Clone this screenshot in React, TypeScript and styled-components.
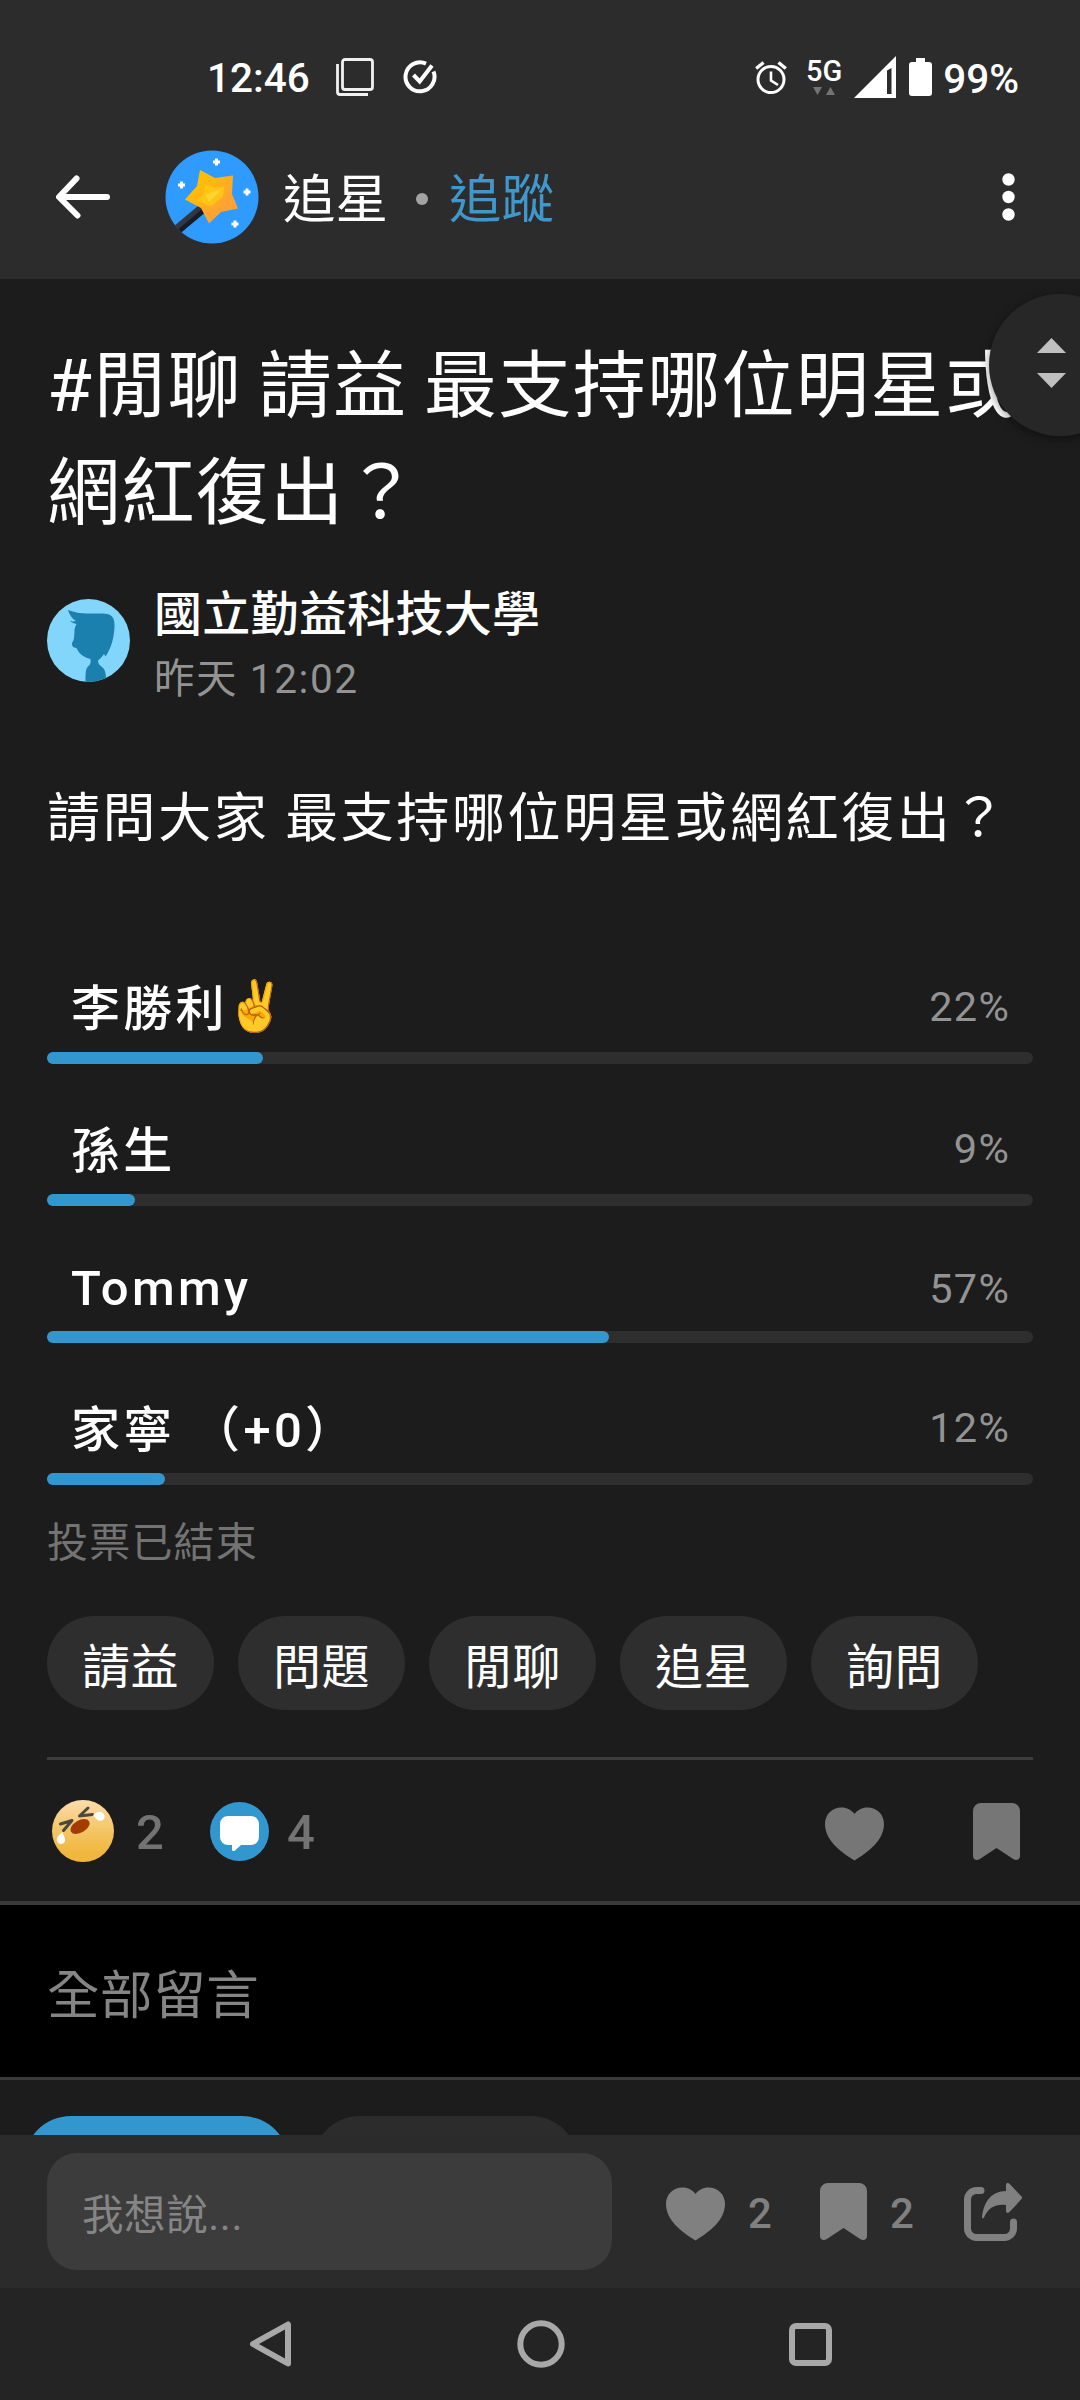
import React from "react";
import styled, { createGlobalStyle } from "styled-components";

const GlobalStyle = createGlobalStyle`
  *, *::before, *::after { box-sizing: border-box; }
  body {
    margin: 0;
    background: #1c1c1c;
    font-family: Roboto, "Noto Sans CJK TC", "Noto Color Emoji", sans-serif;
    color: #fff;
  }
  svg { display: block; flex: none; }
`;

const Screen = styled.div`
  width: 1080px;
  height: 2400px;
  display: flex;
  flex-direction: column;
  overflow: hidden;
  background: #1c1c1c;
`;

const TopArea = styled.header`
  flex: none;
  height: 279px;
  background: #2c2c2c;
`;

const StatusBar = styled.div`
  height: 154px;
  padding: 0 61px 0 207px;
  display: flex;
  align-items: center;
  justify-content: space-between;
`;

const StatusGroup = styled.div`
  display: flex;
  align-items: center;
`;

const StatusText = styled.span<{ $drop?: number }>`
  display: block;
  font-size: 40.5px;
  font-weight: 500;
  line-height: 48px;
  margin-top: ${(p) => p.$drop ?? 0}px;
`;

const StatusIcon = styled.span<{ $gap: number }>`
  margin-left: ${(p) => p.$gap}px;
`;

const Network = styled.div`
  margin-left: 20px;
  width: 34px;
  display: flex;
  flex-direction: column;
  align-items: center;
  gap: 4px;
  font-size: 29px;
  font-weight: 500;
  line-height: 24px;
`;

const AppBar = styled.div`
  height: 85px;
  padding: 0 65px 0 56px;
  display: flex;
  align-items: center;
`;

const ForumIcon = styled.div`
  margin-left: 55px;
`;

const ForumName = styled.h1`
  margin: 7px 0 0 24px;
  font-size: 52.5px;
  font-weight: 400;
  line-height: 64px;
`;

const Dot = styled.span`
  width: 12px;
  height: 12px;
  margin: 5px 21px 0 28px;
  border-radius: 50%;
  background: #a3a3a3;
`;

const FollowLink = styled.span`
  margin-top: 7px;
  font-size: 52.5px;
  line-height: 64px;
  color: #3f97cb;
`;

const Spacer = styled.div`
  flex: 1;
`;

const Post = styled.main`
  position: relative;
  flex: none;
  height: 1622px;
  padding: 54px 47px 0;
`;

const ScrollHandle = styled.div`
  position: absolute;
  top: 15px;
  left: 989px;
  width: 142px;
  height: 142px;
  padding: 0 0 5px 48px;
  border-radius: 50%;
  background: #272727;
  box-shadow: 0 3px 10px rgba(0, 0, 0, 0.4);
  display: flex;
  flex-direction: column;
  justify-content: center;
  gap: 20px;
`;

const PostTitle = styled.h2`
  margin: 0;
  width: 1010px;
  font-size: 73px;
  font-weight: 400;
  line-height: 107px;
  letter-spacing: 1.4px;
  word-spacing: -3px;
  white-space: nowrap;
`;

const Author = styled.div`
  margin-top: 40px;
  display: flex;
  align-items: flex-start;
  gap: 24px;
`;

const AvatarSlot = styled.div`
  padding-top: 12px;
`;

const AuthorName = styled.div`
  font-size: 48px;
  font-weight: 500;
  line-height: 56px;
  letter-spacing: 0.3px;
`;

const PostDate = styled.div`
  margin-top: 13px;
  font-size: 40.5px;
  line-height: 46px;
  letter-spacing: 1.6px;
  color: #939393;
`;

const PostBody = styled.p`
  margin: 85px 0 0;
  font-size: 53px;
  line-height: 64px;
  letter-spacing: 2.6px;
  white-space: nowrap;
`;

const Poll = styled.div`
  margin-top: 113px;
  display: flex;
  flex-direction: column;
  gap: 42px;
`;

const Option = styled.div<{ $latin: boolean }>`
  padding-top: ${(p) => (p.$latin ? 11 : 16)}px;
`;

const OptionHead = styled.div`
  height: 72px;
  padding: 0 23px 0 24px;
  display: flex;
  justify-content: space-between;
`;

const OptionName = styled.span`
  display: flex;
  font-size: 49px;
  font-weight: 500;
  line-height: 60px;
  letter-spacing: 3.3px;
  white-space: pre;
`;

const OptionPercent = styled.span<{ $latin: boolean }>`
  font-size: 41.5px;
  line-height: ${(p) => (p.$latin ? 59 : 54)}px;
  letter-spacing: 1.2px;
  color: #939393;
`;

const HandSlot = styled.span`
  margin: -3px 0 0 -3px;
`;

const Track = styled.div`
  height: 12px;
  border-radius: 6px;
  background: #2e2e2e;
`;

const Fill = styled.div`
  height: 12px;
  border-radius: 6px;
  background: #3397cf;
`;

const PollNote = styled.div`
  margin-top: 30px;
  font-size: 41px;
  line-height: 56px;
  letter-spacing: 1.2px;
  color: #737373;
`;

const Tags = styled.div`
  margin-top: 45px;
  display: flex;
  gap: 24px;
`;

const Tag = styled.span`
  width: 167px;
  height: 94px;
  padding-top: 10px;
  border-radius: 47px;
  background: #2e2e2e;
  font-size: 48px;
  line-height: 84px;
  letter-spacing: 0.6px;
  text-align: center;
`;

const Divider = styled.hr`
  margin: 47px 0 0;
  height: 3px;
  border: 0;
  background: #3d3d3d;
`;

const Reactions = styled.div`
  height: 142px;
  padding: 0 13px 0 5px;
  display: flex;
  align-items: center;
`;

const Count = styled.span<{ $small?: boolean }>`
  font-size: ${(p) => (p.$small ? 42 : 49)}px;
  font-weight: 500;
  line-height: 60px;
  color: ${(p) => (p.$small ? "#808080" : "#737373")};
`;

const ReactionCount = styled(Count)`
  width: 96px;
  padding: 3px 0 0 22px;
`;

const CommentCount = styled(Count)`
  padding: 4px 0 0 18px;
`;

const HeartSlot = styled.div`
  padding-top: 5px;
`;

const ActionGap = styled.div`
  width: 89px;
`;

const SectionHead = styled.div`
  flex: none;
  height: 179px;
  padding: 0 47px;
  border-top: 4px solid #3a3a3a;
  border-bottom: 3px solid #3a3a3a;
  background: #000;
  font-size: 52.5px;
  line-height: 182px;
  letter-spacing: 0.6px;
  color: #858585;
`;

const Filters = styled.div`
  flex: none;
  height: 55px;
  padding: 36px 24px 0;
  display: flex;
  gap: 24px;
  overflow: hidden;
`;

const FilterPill = styled.div<{ $active?: boolean }>`
  width: 265px;
  height: 94px;
  border-radius: 47px;
  background: ${(p) => (p.$active ? "#3397cf" : "#2c2c2c")};
`;

const ReplyBar = styled.div`
  flex: none;
  height: 153px;
  padding: 0 58px 0 47px;
  display: flex;
  align-items: center;
  background: #2b2b2b;
`;

const ReplyInput = styled.div`
  width: 565px;
  height: 117px;
  margin-right: 54px;
  padding: 8px 35px 0;
  border-radius: 30px;
  background: #3c3c3c;
  font-size: 41.5px;
  line-height: 109px;
  letter-spacing: 0.6px;
  color: #858585;
`;

const ReplyCount = styled(Count)<{ $right: number }>`
  padding: 4px ${(p) => p.$right}px 0 23px;
`;

const NavBar = styled.nav`
  flex: none;
  height: 112px;
  padding: 0 248px 0 249px;
  display: flex;
  align-items: center;
  justify-content: space-between;
  background: #242424;
`;

const OverviewIcon = () => (
  <svg width="38" height="38" viewBox="0 0 38 38" fill="none" stroke="#f0f0f0" strokeWidth="2.8">
    <rect x="6.5" y="1.5" width="30" height="30" rx="2.5" />
    <path d="M1.5 6v28a2.500 2.500 0 0 0 2.500 2.500h28" />
  </svg>
);

const CheckCircleIcon = () => (
  <svg width="34" height="34" viewBox="0 0 34 34" fill="none" stroke="#fff" strokeWidth="4">
    <path d="M23 3.600A14.500 14.500 0 1 0 30.500 11.500" />
    <path d="M10.500 15l6.200 6.500L29 5.500" />
  </svg>
);

const AlarmIcon = () => (
  <svg width="32" height="33" viewBox="0 0 32 33" fill="none" stroke="#fff">
    <circle cx="16" cy="18.5" r="13" strokeWidth="3" />
    <path d="M16 10.500v9l7 4.500" strokeWidth="2.6" />
    <path d="M1.200 7.500L8.500 1.500M30.800 7.500L23.500 1.500" strokeWidth="3.4" />
  </svg>
);

const DataArrows = () => (
  <svg width="24" height="8" viewBox="0 0 24 8" fill="#747474">
    <path d="M1 0h9L5.500 8zM14 8h9L18.500 0z" />
  </svg>
);

const SignalIcon = () => (
  <svg width="42" height="42" viewBox="0 0 42 42">
    <path fill="#fff" fillRule="evenodd" d="M42 0v42H0zM33 14.500V38h4.500V12z" />
  </svg>
);

const BatteryIcon = () => (
  <svg width="23" height="38" viewBox="0 0 23 38" fill="#fff">
    <path d="M7 0h9v4h4a3 3 0 0 1 3 3v28a3 3 0 0 1-3 3H3a3 3 0 0 1-3-3V7a3 3 0 0 1 3-3h4z" />
  </svg>
);

const BackIcon = () => (
  <svg width="54" height="44" viewBox="0 0 54 44" fill="none" stroke="#fff" strokeWidth="6" strokeLinecap="round" strokeLinejoin="round">
    <path d="M51 22H3.500M20.500 3.500L3 22l18.500 18.500" />
  </svg>
);

const sparkles = [
  [51.5, 12],
  [16.5, 35],
  [82, 42],
  [70, 74],
];

const WandIcon = () => (
  <svg width="94" height="94" viewBox="0 0 94 94">
    <defs>
      <clipPath id="wandClip">
        <circle cx="47" cy="47" r="46.5" />
      </clipPath>
      <linearGradient id="starFill" x1="0" y1="0" x2="1" y2="1">
        <stop offset="0.25" stopColor="#ffbe05" />
        <stop offset="0.7" stopColor="#ffa233" />
      </linearGradient>
    </defs>
    <circle cx="47" cy="47" r="46.5" fill="#2f9bff" />
    <g clipPath="url(#wandClip)">
      <path d="M9 82L40 56" stroke="#323843" strokeWidth="9" />
      <path d="M11 84L42 58" stroke="#191c24" strokeWidth="4.5" />
    </g>
    <path d="M35 20L50 28 68 25.500 67 44 73 58.500 56 62 44 73.500 36 58 20 49.500 32 36z" fill="url(#starFill)" strokeLinejoin="round" />
    <path d="M40 34l10 4 9-1.500-1 10-10 8.500-4 1-12-5 7-7z" fill="#ffce12" opacity="0.7" />
    <path d="M57 39L44 52l-4-7z" fill="#ffd83a" opacity="0.8" />
    {sparkles.map(([x, y]) => (
      <path key={x} d={`M${x - 3.5} ${y}h7M${x} ${y - 3.5}v7`} stroke="#fff" strokeWidth="3" />
    ))}
  </svg>
);

const MoreIcon = () => (
  <svg width="13" height="48" viewBox="0 0 13 48" fill="#fff">
    <circle cx="6.5" cy="6.5" r="6.2" />
    <circle cx="6.5" cy="24" r="6.2" />
    <circle cx="6.5" cy="41.5" r="6.2" />
  </svg>
);

const Caret = ({ down }: { down?: boolean }) => (
  <svg width="29" height="15" viewBox="0 0 29 15" fill="#c0c0c0">
    <path d={down ? "M0 0h29L14.500 15z" : "M0 15h29L14.500 0z"} />
  </svg>
);

const AuthorAvatar = () => (
  <svg width="83" height="83" viewBox="0 0 83 83">
    <defs>
      <clipPath id="avatarClip">
        <circle cx="41.5" cy="41.5" r="41.5" />
      </clipPath>
    </defs>
    <circle cx="41.5" cy="41.5" r="41.5" fill="#82d6fb" />
    <g clipPath="url(#avatarClip)" fill="#1b80ad">
      <path d="M21 11C28 13.500 33 14.500 40 14.500H56C64 14.500 67.500 18 67.500 26C67.500 38 64 50 58.500 57.500L57 55C55 58 53 60 51 61.500C51 65 53 66.500 55 68C58.500 70.500 59 75 59 83H38.500C38.500 74 38.500 69.500 41.500 67C43.500 65.500 44 63 43.500 60C36 58 31.500 54 29.500 49C26 49 24 46 25.500 43C27.500 41 27 36 27.500 33C27 30 28.500 27 29.500 25C27 24.500 25 23.500 22.500 22C25 22.500 27 22.500 29 22C25 19.500 22.500 16 21 11Z" />
    </g>
  </svg>
);

const LaughIcon = () => (
  <svg width="62" height="62" viewBox="0 0 62 62">
    <defs>
      <linearGradient id="laughFill" x1="0" y1="0" x2="0" y2="1">
        <stop offset="0" stopColor="#fbdcab" />
        <stop offset="0.5" stopColor="#f5c565" />
        <stop offset="0.85" stopColor="#f0b73e" />
      </linearGradient>
    </defs>
    <circle cx="31" cy="31" r="31" fill="url(#laughFill)" />
    <g fill="none" stroke="#4c4840" strokeWidth="3" strokeLinecap="round" strokeLinejoin="round">
      <path d="M36 8L27.500 16l13-1.500" />
      <path d="M8.500 24L20 20.500l-8.500 10" />
    </g>
    <ellipse cx="28" cy="26.5" rx="10.5" ry="6.2" transform="rotate(-30 28 26.5)" fill="#a33c02" />
    <path d="M41 15.200c3-3.500 8-4.500 10.500-1.500 2.500 3.500.5 7-3.500 7-3 0-4.500-3.500-7-5.500z" fill="#fff" />
    <path d="M10.500 32c-4 3-6.500 6-5.500 9 1 4 7 4 8 0 .7-3-1.500-5-2.500-9z" fill="#fff" />
  </svg>
);

const CommentIcon = () => (
  <svg width="59" height="59" viewBox="0 0 59 59">
    <circle cx="29.5" cy="29.5" r="29.5" fill="#3397cf" />
    <path fill="#fff" d="M18 14h23a8 8 0 0 1 8 8v13a8 8 0 0 1-8 8H31l-6 5.500c-1.500 1.200-3 .5-3-1V43h-4a8 8 0 0 1-8-8V22a8 8 0 0 1 8-8z" />
  </svg>
);

const HeartIcon = ({ color }: { color: string }) => (
  <svg width="59" height="54" viewBox="0 0 59 54" fill={color}>
    <path d="M29.500 7C26.500 3 22 .5 16.500 .5 7 .5 0 7.500 0 17c0 16 15 27.500 29.500 36.500C44 44.500 59 33 59 17 59 7.500 52 .5 42.500 .5 37 .5 32.500 3 29.500 7z" />
  </svg>
);

const BookmarkIcon = ({ color }: { color: string }) => (
  <svg width="47" height="57" viewBox="0 0 47 57" fill={color}>
    <path d="M8 0h31a8 8 0 0 1 8 8v45c0 3.500-3.500 5-6.500 3.200L23.500 45 6.500 56.200C3.500 58 0 56.500 0 53V8a8 8 0 0 1 8-8z" />
  </svg>
);

const ShareIcon = () => (
  <svg width="58" height="58" viewBox="0 0 58 58">
    <path d="M17 7.500h-4.500a9 9 0 0 0-9 9v29a9 9 0 0 0 9 9h28a9 9 0 0 0 9-9V39" fill="none" stroke="#808080" strokeWidth="7" strokeLinecap="round" />
    <path d="M42 2c0-2 2-2.500 3.500-1.200l12 12.700c.7.800.7 1.800 0 2.600l-12 13C44 30.500 42 30 42 28v-6c-11-1-17.500 2.500-22 12.500-.8 1.500-2.200 1-2-.5C20 18 27.500 8.500 42 8z" fill="#808080" />
  </svg>
);

const NavBackIcon = () => (
  <svg width="43" height="46" viewBox="0 0 43 46" fill="none" stroke="#a8a8a8" strokeWidth="6" strokeLinejoin="round">
    <path d="M39 3.500v39L4 23z" />
  </svg>
);

const NavHomeIcon = () => (
  <svg width="48" height="48" viewBox="0 0 48 48" fill="none" stroke="#a8a8a8" strokeWidth="6">
    <circle cx="24" cy="24" r="20.7" />
  </svg>
);

const NavRecentIcon = () => (
  <svg width="43" height="43" viewBox="0 0 43 43" fill="none" stroke="#a8a8a8" strokeWidth="6">
    <rect x="3" y="3" width="37" height="37" rx="4" />
  </svg>
);

const options = [
  { name: "李勝利", percent: 22, width: 21.9, victory: true },
  { name: "孫生", percent: 9, width: 8.95 },
  { name: "Tommy", percent: 57, width: 57, latin: true },
  { name: "家寧 （+0）", percent: 12, width: 12 },
];

const tags = ["請益", "問題", "閒聊", "追星", "詢問"];

export default function App() {
  return (
    <>
      <GlobalStyle />
      <Screen>
        <TopArea>
          <StatusBar>
            <StatusGroup>
              <StatusText $drop={1}>12:46</StatusText>
              <StatusIcon $gap={26}><OverviewIcon /></StatusIcon>
              <StatusIcon $gap={29}><CheckCircleIcon /></StatusIcon>
            </StatusGroup>
            <StatusGroup>
              <AlarmIcon />
              <Network>
                5G
                <DataArrows />
              </Network>
              <StatusIcon $gap={13}><SignalIcon /></StatusIcon>
              <StatusIcon $gap={13}><BatteryIcon /></StatusIcon>
              <StatusIcon $gap={11}><StatusText $drop={4}>99%</StatusText></StatusIcon>
            </StatusGroup>
          </StatusBar>
          <AppBar>
            <BackIcon />
            <ForumIcon><WandIcon /></ForumIcon>
            <ForumName>追星</ForumName>
            <Dot />
            <FollowLink>追蹤</FollowLink>
            <Spacer />
            <MoreIcon />
          </AppBar>
        </TopArea>

        <Post>
          <PostTitle>
            #閒聊 請益 最支持哪位明星或
            <br />
            網紅復出？
          </PostTitle>
          <ScrollHandle>
            <Caret />
            <Caret down />
          </ScrollHandle>
          <Author>
            <AvatarSlot><AuthorAvatar /></AvatarSlot>
            <div>
              <AuthorName>國立勤益科技大學</AuthorName>
              <PostDate>昨天 12:02</PostDate>
            </div>
          </Author>
          <PostBody>請問大家 最支持哪位明星或網紅復出？</PostBody>
          <Poll>
            {options.map((o) => (
              <Option key={o.name} $latin={!!o.latin}>
                <OptionHead>
                  <OptionName>
                    {o.name}
                    {o.victory && <HandSlot>✌️</HandSlot>}
                  </OptionName>
                  <OptionPercent $latin={!!o.latin}>{o.percent}%</OptionPercent>
                </OptionHead>
                <Track>
                  <Fill style={{ width: `${o.width}%` }} />
                </Track>
              </Option>
            ))}
          </Poll>
          <PollNote>投票已結束</PollNote>
          <Tags>
            {tags.map((t) => (
              <Tag key={t}>{t}</Tag>
            ))}
          </Tags>
          <Divider />
          <Reactions>
            <LaughIcon />
            <ReactionCount>2</ReactionCount>
            <CommentIcon />
            <CommentCount>4</CommentCount>
            <Spacer />
            <HeartSlot><HeartIcon color="#767676" /></HeartSlot>
            <ActionGap />
            <BookmarkIcon color="#767676" />
          </Reactions>
        </Post>

        <SectionHead>全部留言</SectionHead>
        <Filters>
          <FilterPill $active />
          <FilterPill />
        </Filters>
        <ReplyBar>
          <ReplyInput>我想說...</ReplyInput>
          <HeartSlot><HeartIcon color="#808080" /></HeartSlot>
          <ReplyCount $small $right={48}>2</ReplyCount>
          <BookmarkIcon color="#808080" />
          <ReplyCount $small $right={50}>2</ReplyCount>
          <ShareIcon />
        </ReplyBar>
        <NavBar>
          <NavBackIcon />
          <NavHomeIcon />
          <NavRecentIcon />
        </NavBar>
      </Screen>
    </>
  );
}
